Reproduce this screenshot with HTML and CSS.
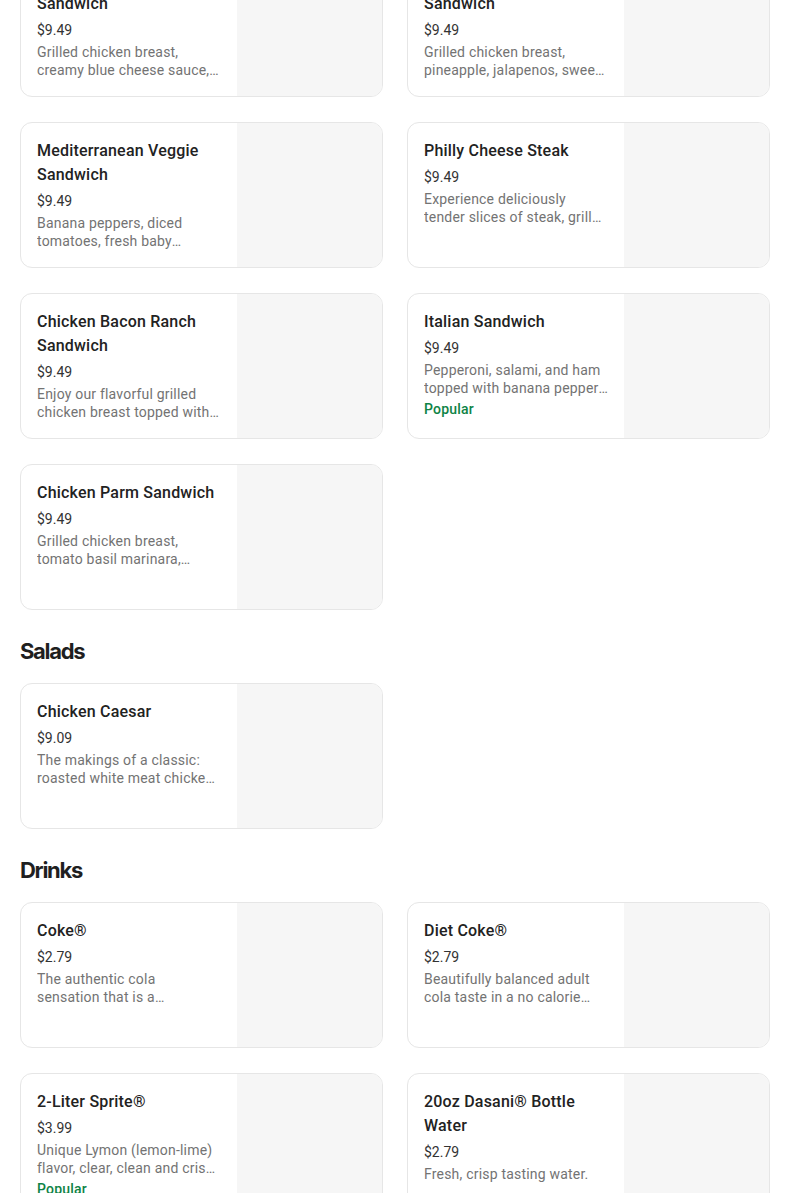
FILE: index.html
```html
<!DOCTYPE html>
<html lang="en">
<head>
    <meta charset="UTF-8">
    <meta name="viewport" content="width=device-width, initial-scale=1.0">
    <title>Menu</title>
    <link rel="stylesheet" href="styles.css">
</head>
<body>
    <div class="menu">
        <section class="menu-section first">
            <div class="item-grid">
                <div class="item-card">
                    <div class="item-info">
                        <div class="item-name">Buffalo Chicken Sandwich</div>
                        <div class="item-price">$9.49</div>
                        <div class="item-desc">Grilled chicken breast, creamy blue cheese sauce, buffalo sauce, lettuce and tomatoes.</div>
                    </div>
                    <div class="item-image"></div>
                </div>
                <div class="item-card">
                    <div class="item-info">
                        <div class="item-name">Hawaiian Chicken Sandwich</div>
                        <div class="item-price">$9.49</div>
                        <div class="item-desc">Grilled chicken breast, pineapple, jalapenos, sweet chili sauce and provolone.</div>
                    </div>
                    <div class="item-image"></div>
                </div>
                <div class="item-card">
                    <div class="item-info">
                        <div class="item-name">Mediterranean Veggie Sandwich</div>
                        <div class="item-price">$9.49</div>
                        <div class="item-desc">Banana peppers, diced tomatoes, fresh baby spinach, feta cheese and red onions.</div>
                    </div>
                    <div class="item-image"></div>
                </div>
                <div class="item-card">
                    <div class="item-info">
                        <div class="item-name">Philly Cheese Steak</div>
                        <div class="item-price">$9.49</div>
                        <div class="item-desc">Experience deliciously tender slices of steak, grilled onions and peppers.</div>
                    </div>
                    <div class="item-image"></div>
                </div>
                <div class="item-card">
                    <div class="item-info">
                        <div class="item-name">Chicken Bacon Ranch Sandwich</div>
                        <div class="item-price">$9.49</div>
                        <div class="item-desc">Enjoy our flavorful grilled chicken breast topped with bacon and ranch.</div>
                    </div>
                    <div class="item-image"></div>
                </div>
                <div class="item-card">
                    <div class="item-info">
                        <div class="item-name">Italian Sandwich</div>
                        <div class="item-price">$9.49</div>
                        <div class="item-desc">Pepperoni, salami, and ham topped with banana peppers and provolone.</div>
                        <div class="item-tag">Popular</div>
                    </div>
                    <div class="item-image"></div>
                </div>
                <div class="item-card">
                    <div class="item-info">
                        <div class="item-name">Chicken Parm Sandwich</div>
                        <div class="item-price">$9.49</div>
                        <div class="item-desc">Grilled chicken breast, tomato basil marinara, mozzarella and parmesan.</div>
                    </div>
                    <div class="item-image"></div>
                </div>
            </div>
        </section>

        <section class="menu-section">
            <h2>Salads</h2>
            <div class="item-grid">
                <div class="item-card">
                    <div class="item-info">
                        <div class="item-name">Chicken Caesar</div>
                        <div class="item-price">$9.09</div>
                        <div class="item-desc">The makings of a classic: roasted white meat chicken, romaine and parmesan.</div>
                    </div>
                    <div class="item-image"></div>
                </div>
            </div>
        </section>

        <section class="menu-section">
            <h2>Drinks</h2>
            <div class="item-grid">
                <div class="item-card">
                    <div class="item-info">
                        <div class="item-name">Coke®</div>
                        <div class="item-price">$2.79</div>
                        <div class="item-desc">The authentic cola sensation that is a refreshing part of sharing life's enjoyable moments.</div>
                    </div>
                    <div class="item-image"></div>
                </div>
                <div class="item-card">
                    <div class="item-info">
                        <div class="item-name">Diet Coke®</div>
                        <div class="item-price">$2.79</div>
                        <div class="item-desc">Beautifully balanced adult cola taste in a no calorie beverage.</div>
                    </div>
                    <div class="item-image"></div>
                </div>
                <div class="item-card">
                    <div class="item-info">
                        <div class="item-name">2-Liter Sprite®</div>
                        <div class="item-price">$3.99</div>
                        <div class="item-desc">Unique Lymon (lemon-lime) flavor, clear, clean and crisp with no caffeine.</div>
                        <div class="item-tag">Popular</div>
                    </div>
                    <div class="item-image"></div>
                </div>
                <div class="item-card">
                    <div class="item-info">
                        <div class="item-name">20oz Dasani® Bottle Water</div>
                        <div class="item-price">$2.79</div>
                        <div class="item-desc">Fresh, crisp tasting water.</div>
                    </div>
                    <div class="item-image"></div>
                </div>
            </div>
        </section>
    </div>
</body>
</html>
```

FILE: styles.css
```css
body {
    font-family: Roboto, 'Noto Sans', sans-serif;
    background-color: white;
    color: #222;
    margin: 0;
}
.menu {
    padding: 0 34px 40px 20px;
}
.menu-section {
    margin-top: 25px;
}
.menu-section.first {
    margin-top: -49px;
}
.menu-section h2 {
    font-family: Inter, sans-serif;
    font-size: 22px;
    font-weight: 700;
    letter-spacing: -1.3px;
    line-height: 32px;
    color: #1f1f1f;
    margin: 0 0 16px 0;
}
.item-grid {
    display: grid;
    grid-template-columns: 1fr 1fr;
    column-gap: 24px;
    row-gap: 25px;
}
.item-card {
    display: flex;
    height: 146px;
    box-sizing: border-box;
    border: 1px solid #e6e6e6;
    border-radius: 12px;
    overflow: hidden;
    background-color: white;
}
.item-info {
    flex: 1;
    min-width: 0;
    padding: 16px 16px 0 16px;
}
.item-image {
    width: 145px;
    flex-shrink: 0;
    background-color: #f6f6f6;
}
.item-name {
    font-size: 16px;
    font-weight: 500;
    line-height: 24px;
    letter-spacing: 0.2px;
    color: #222;
}
.item-price {
    font-size: 14px;
    line-height: 20px;
    color: #333;
    margin-top: 4px;
}
.item-desc {
    font-size: 14px;
    line-height: 18px;
    letter-spacing: 0.2px;
    color: #737373;
    margin-top: 3px;
    display: -webkit-box;
    -webkit-line-clamp: 2;
    -webkit-box-orient: vertical;
    overflow: hidden;
}
.item-tag {
    font-size: 14px;
    font-weight: 500;
    line-height: 18px;
    letter-spacing: 0.2px;
    color: #0e8345;
    margin-top: 3px;
}
```
